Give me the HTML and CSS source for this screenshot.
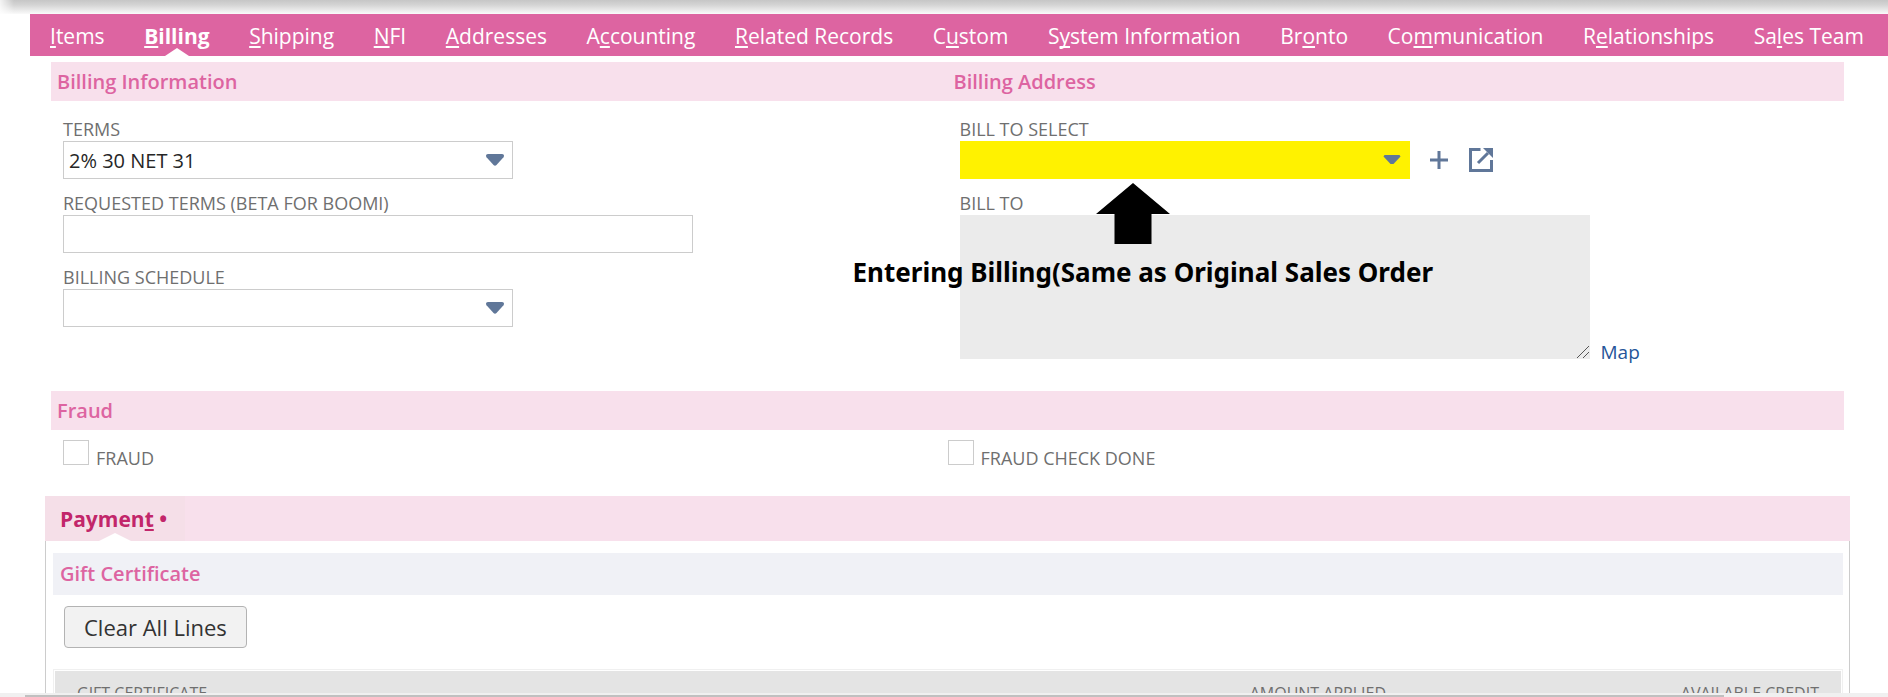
FILE: index.html
```html
<!DOCTYPE html>
<html lang="en">
<head>
<meta charset="utf-8">
<title>Sales Order - Billing</title>
<link rel="stylesheet" href="styles.css">
</head>
<body>
<div class="page-shadow"></div>
<main class="page">
  <nav class="tabs" aria-label="Record tabs">
    <a class="tab" href="#items"><u>I</u>tems</a>
    <a class="tab tab-active" href="#billing"><u>B</u>illing</a>
    <a class="tab" href="#shipping"><u>S</u>hipping</a>
    <a class="tab" href="#nfi"><u>N</u>FI</a>
    <a class="tab" href="#addresses"><u>A</u>ddresses</a>
    <a class="tab" href="#accounting">A<u>c</u>counting</a>
    <a class="tab" href="#related"><u>R</u>elated Records</a>
    <a class="tab" href="#custom">C<u>u</u>stom</a>
    <a class="tab" href="#system">S<u>y</u>stem Information</a>
    <a class="tab" href="#bronto">Br<u>o</u>nto</a>
    <a class="tab" href="#communication">Co<u>m</u>munication</a>
    <a class="tab" href="#relationships">R<u>e</u>lationships</a>
    <a class="tab" href="#sales-team">Sa<u>l</u>es Team</a>
  </nav>

  <section class="billing" id="billing">
    <div class="section-bar two-col">
      <h2 class="section-title">Billing Information</h2>
      <h2 class="section-title">Billing Address</h2>
    </div>
    <div class="two-col">
      <div class="fields">
        <div class="field">
          <label class="label" for="terms">TERMS</label>
          <div class="dropdown">
            <select class="control" id="terms"><option>2% 30 NET 31</option></select>
            <svg class="caret" viewBox="0 0 18 12" aria-hidden="true"><path d="M2 0h14c2 0 2.500 2 1.500 3.200l-7 7.800c-1 1-2 1-3 0l-7-7.800C-.5 2 0 0 2 0z"/></svg>
          </div>
        </div>
        <div class="field">
          <label class="label" for="requested">REQUESTED TERMS (BETA FOR BOOMI)</label>
          <input class="control control-wide" id="requested" type="text">
        </div>
        <div class="field">
          <label class="label" for="schedule">BILLING SCHEDULE</label>
          <div class="dropdown">
            <select class="control" id="schedule"><option></option></select>
            <svg class="caret" viewBox="0 0 18 12" aria-hidden="true"><path d="M2 0h14c2 0 2.500 2 1.500 3.200l-7 7.800c-1 1-2 1-3 0l-7-7.800C-.5 2 0 0 2 0z"/></svg>
          </div>
        </div>
      </div>

      <div class="fields">
        <div class="field">
          <label class="label" for="billto-select">BILL TO SELECT</label>
          <div class="field-row">
            <div class="dropdown">
              <select class="control control-marked" id="billto-select"><option></option></select>
              <svg class="caret" viewBox="0 0 18 12" aria-hidden="true"><path d="M1.500 1h15l1 1.500L10.500 10h-3L.5 2.500z"/></svg>
            </div>
            <button class="icon-button" type="button" aria-label="New address"><svg class="icon-plus" viewBox="0 0 18 18" aria-hidden="true"><path d="M9 0v18M0 9h18"/></svg></button>
            <button class="icon-button" type="button" aria-label="Open address"><svg class="icon-open" viewBox="0 0 26 26" aria-hidden="true"><path class="line" d="M12.500 2.500H2.500v21h21V13M10 16 20 6"/><path class="solid" d="M15 1h10v10z"/></svg></button>
          </div>
        </div>
        <div class="field">
          <label class="label" for="billto">BILL TO</label>
          <div class="field-row field-row-end">
            <div class="address-wrap">
              <textarea class="address" id="billto" readonly></textarea>
              <svg class="grip" viewBox="0 0 14 14" aria-hidden="true"><path d="M1 13 13 1M7 13 13 7"/></svg>
            </div>
            <a class="map-link" href="#map">Map</a>
          </div>
        </div>
        <div class="note">
          <svg class="note-arrow" viewBox="0 0 74 61" aria-hidden="true"><path d="M37 0 74 31H55.500V61h-37V31H0z"/></svg>
          <span class="note-text">Entering Billing(Same as Original Sales Order</span>
        </div>
      </div>
    </div>

    <div class="section-bar"><h2 class="section-title">Fraud</h2></div>
    <div class="two-col checks">
      <label class="check check-inset"><input class="box" type="checkbox"><span>FRAUD</span></label>
      <label class="check"><input class="box" type="checkbox"><span>FRAUD CHECK DONE</span></label>
    </div>
  </section>

  <section class="payment">
    <div class="payment-bar"><a class="payment-tab" href="#payment">Paymen<u>t</u> •</a></div>
    <div class="payment-body" id="payment">
      <h2 class="gift-title">Gift Certificate</h2>
      <button class="clear-button" type="button">Clear All Lines</button>
      <div class="grid-frame">
        <table class="grid">
          <thead><tr><th class="col-name">GIFT CERTIFICATE</th><th class="num">AMOUNT APPLIED</th><th class="num">AVAILABLE CREDIT</th></tr></thead>
        </table>
      </div>
    </div>
  </section>
</main>
<div class="scrollbar"><div class="thumb"></div></div>
</body>
</html>
```
FILE: styles.css
```css
* { box-sizing: border-box; }

body {
  margin: 0;
  height: 100vh;
  display: flex;
  flex-direction: column;
  overflow: hidden;
  background: #fff;
  color: #262626;
  font-family: "Open Sans", "Noto Sans", sans-serif;
  font-size: 18px;
}

h2 { margin: 0; }

/* Shadow cast by the header that is scrolled out of view */
.page-shadow {
  height: 14px;
  flex: none;
  background: linear-gradient(#c6c6c6, #d4d4d4 35%, #fafafa);
  mask-image: linear-gradient(to right, rgba(0, 0, 0, 0.2), #000 14px);
}

.page {
  flex: 1;
  min-height: 0;
  overflow: hidden;
}

.tabs {
  position: relative;
  display: flex;
  justify-content: space-between;
  height: 42px;
  margin-left: 30px;
  padding: 0 24px 0 20px;
  overflow: hidden;
  background: #dd64a1;
}

.tab {
  position: relative;
  flex: none;
  color: #fff;
  font-size: 21px;
  line-height: 44px;
  text-decoration: none;
}

.tab u, .payment-tab u {
  text-decoration-thickness: 2px;
  text-underline-offset: 2px;
  text-decoration-skip-ink: none;
}

.tab-active { font-weight: 700; }

.tab-active::after, .payment-tab::after {
  content: "";
  position: absolute;
  left: 50%;
  bottom: 0;
  border: 12px solid transparent;
  border-top-width: 0;
  border-bottom: 8px solid #fff;
  transform: translateX(-50%);
}

.billing { margin: 6px 44px 0 51px; }

.two-col {
  display: grid;
  grid-template-columns: 1fr 1fr;
}

.section-bar { background: #f8e0ec; }

.section-title {
  padding-left: 6px;
  color: #dd64a1;
  font-size: 20px;
  font-weight: 600;
  line-height: 39px;
}

.fields {
  position: relative;
  display: flex;
  flex-direction: column;
  gap: 12px;
  padding: 16px 0 32px 12px;
}

.label {
  display: block;
  color: #6f6f6f;
  line-height: 24px;
}

.control {
  display: block;
  width: 450px;
  height: 38px;
  padding: 0 5px;
  border: 1px solid #ccc;
  border-radius: 0;
  background: #fff;
  color: #262626;
  font: inherit;
  font-size: 20px;
  appearance: none;
}

.control-wide { width: 630px; }

.control-marked {
  border-color: #fff200;
  background: #fff200;
}

.dropdown {
  position: relative;
  width: fit-content;
}

.caret {
  position: absolute;
  right: 9px;
  top: 13px;
  width: 18px;
  height: 12px;
  fill: #607799;
  pointer-events: none;
}

.field-row {
  display: flex;
  align-items: center;
}

.field-row-end { align-items: flex-end; }

.icon-button {
  display: flex;
  margin-left: 20px;
  padding: 0;
  border: 0;
  background: none;
}

.icon-plus {
  width: 18px;
  height: 18px;
  fill: none;
  stroke: #607799;
  stroke-width: 3;
}

.icon-open { width: 26px; height: 26px; }
.line { fill: none; stroke: #607799; stroke-width: 3; }
.solid { fill: #607799; }

.address-wrap { position: relative; }

.address {
  display: block;
  width: 630px;
  height: 144px;
  border: 0;
  background: #ebebeb;
  font: inherit;
  resize: none;
}

.grip {
  position: absolute;
  right: 0;
  bottom: 0;
  width: 14px;
  height: 14px;
  fill: none;
  stroke: #555;
}

.map-link {
  margin-left: 11px;
  color: #255599;
  font-size: 19px;
  line-height: 14px;
  text-decoration: none;
}

/* Callout drawn over the address fields */
.note {
  position: absolute;
  left: -95px;
  top: 82px;
  display: flex;
  flex-direction: column;
  align-items: flex-start;
  pointer-events: none;
}

.note-arrow {
  width: 74px;
  height: 61px;
  margin-left: 243px;
}

.note-text {
  color: #000;
  font-family: "Noto Sans", "Open Sans", sans-serif;
  font-size: 26px;
  font-weight: 700;
  line-height: 56px;
  white-space: nowrap;
}

.checks { padding: 10px 0 26px; }

.check {
  display: flex;
  align-items: flex-start;
  gap: 7px;
  color: #6f6f6f;
}

.check span { padding-top: 6px; line-height: 24px; }
.check-inset { padding-left: 12px; }

.box {
  width: 26px;
  height: 25px;
  margin: 0;
  border: 1px solid #ccc;
  background: #fff;
  appearance: none;
}

.payment { margin: 0 38px 0 45px; }

.payment-bar {
  display: flex;
  background: #f8e0ec;
}

.payment-tab {
  position: relative;
  padding: 2px 18px 0 15px;
  background: #f5dfe8;
  color: #c2266a;
  font-size: 21px;
  font-weight: 700;
  line-height: 43px;
  text-decoration: none;
}

.payment-tab::after { border-width: 0 16px 8px; }

.payment-body {
  padding: 12px 6px 0 7px;
  border: solid #ccc;
  border-width: 0 1px;
}

.gift-title {
  padding-left: 7px;
  background: #f0f1f6;
  color: #dd64a1;
  font-size: 20px;
  font-weight: 600;
  line-height: 42px;
}

.clear-button {
  display: block;
  height: 42px;
  margin: 11px 0 21px 11px;
  padding: 0 19px;
  border: 1px solid #b3b3b3;
  border-radius: 4px;
  background: #f2f2f2;
  color: #333;
  font-family: inherit;
  font-size: 22px;
  font-weight: 500;
}

.grid-frame {
  padding: 1px;
  border: 1px solid #f0f0f0;
}

.grid {
  width: 100%;
  border-collapse: collapse;
  table-layout: fixed;
}

.grid th {
  width: 24%;
  padding: 8px 22px;
  background: #e4e4e4;
  color: #6f6f6f;
  font-size: 16px;
  font-weight: 400;
  line-height: 28px;
  text-align: left;
}

.grid .col-name { width: 51%; }
.grid .num { text-align: right; }

.scrollbar {
  flex: none;
  padding-top: 2px;
  background: #f0f0f0;
}

.thumb {
  height: 2px;
  width: 90%;
  margin-left: 25px;
  background: #c0c0c0;
}
```
